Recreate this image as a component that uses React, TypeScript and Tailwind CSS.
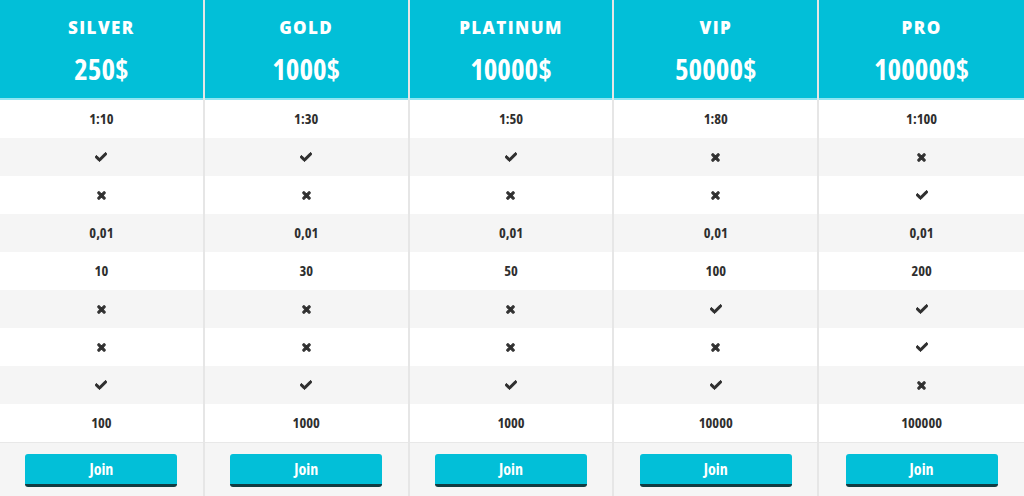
import { FaCheck, FaTimes } from "react-icons/fa";
import { ReactElement } from "react";

type Cell = string | boolean;

interface IPlan {
  name: string;
  price: string;
  rows: Cell[];
}

const plans: IPlan[] = [
  { name: "SILVER", price: "250$", rows: ["1:10", true, false, "0,01", "10", false, false, true, "100"] },
  { name: "GOLD", price: "1000$", rows: ["1:30", true, false, "0,01", "30", false, false, true, "1000"] },
  { name: "PLATINUM", price: "10000$", rows: ["1:50", true, false, "0,01", "50", false, false, true, "1000"] },
  { name: "VIP", price: "50000$", rows: ["1:80", false, false, "0,01", "100", true, false, true, "10000"] },
  { name: "PRO", price: "100000$", rows: ["1:100", false, true, "0,01", "200", true, true, false, "100000"] },
];

const narrow = "font-['Liberation_Sans_Narrow','Open_Sans',sans-serif] [font-stretch:condensed]";

const PlanColumn = ({ plan, last }: { plan: IPlan; last: boolean }): ReactElement => {
  return (
    <div className={`flex flex-col ${last ? "" : "border-r-2 border-[#e6e6e6]"}`}>
      <div className="h-[100px] bg-[#02bfd8] border-b-2 border-[#8fe6f2] flex flex-col items-center text-white">
        <p className="mt-[18px] text-[17px] font-extrabold tracking-[1.4px] font-['Open_Sans',sans-serif] leading-5">
          {plan.name}
        </p>
        <p className={`mt-[13px] text-[29px] font-bold leading-9 ${narrow}`}>{plan.price}</p>
      </div>
      {plan.rows.map((cell, i) => (
        <div
          key={i}
          className={`h-[38px] flex items-center justify-center text-[#2f2f2f] ${i % 2 === 1 ? "bg-[#f5f5f5]" : "bg-white"}`}
        >
          {typeof cell === "string" ? (
            <span className={`text-[14.5px] font-bold ${narrow}`}>{cell}</span>
          ) : cell ? (
            <FaCheck size={12} stroke="currentColor" strokeWidth={40} />
          ) : (
            <FaTimes size={11} stroke="currentColor" strokeWidth={50} />
          )}
        </div>
      ))}
      <div className="flex-1 bg-[#f5f5f5] border-t border-[#e8e8e8] flex justify-center pt-[11px]">
        <button className={`w-[152px] h-[33px] rounded-[3px] bg-[#02bfd8] border-b-[3px] border-[#123c42] text-white text-[16px] font-bold ${narrow}`}>
          Join
        </button>
      </div>
    </div>
  );
};

const App = (): ReactElement => {
  return (
    <div className="w-[1024px] h-[496px] grid grid-cols-5 bg-white overflow-hidden">
      {plans.map((p, i) => (
        <PlanColumn key={p.name} plan={p} last={i === plans.length - 1} />
      ))}
    </div>
  );
};

export default App;
